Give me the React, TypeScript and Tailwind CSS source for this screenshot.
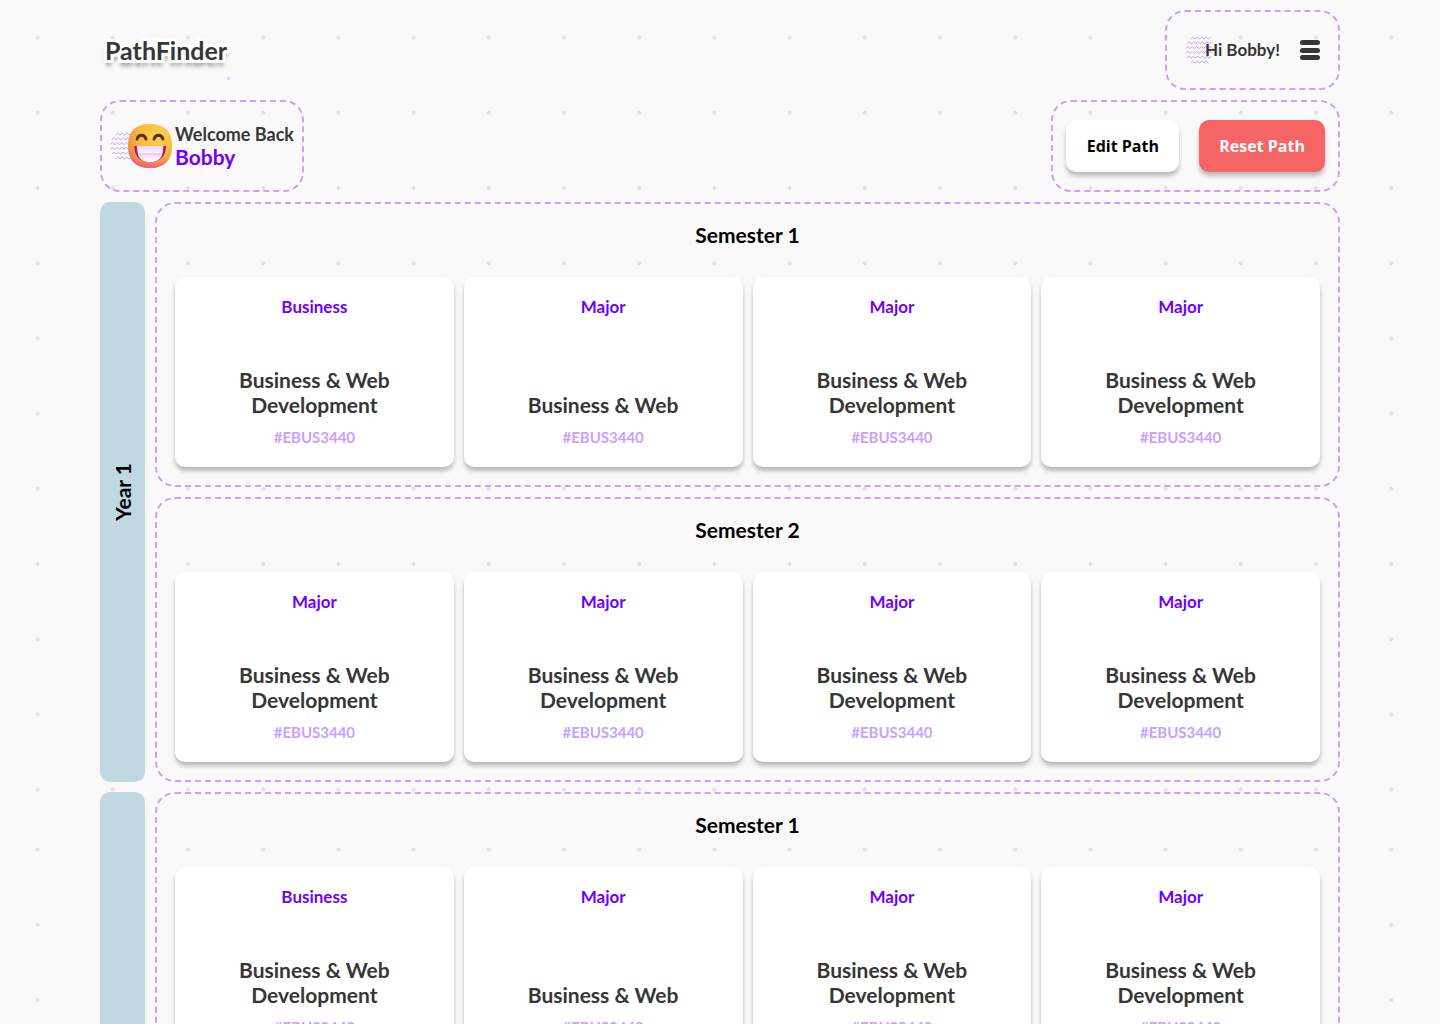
import React from "react";

const FONT = "font-['Century_Gothic','Lato',sans-serif]";

type Course = { category: string; title: string; code: string };
type Semester = { name: string; courses: Course[] };
type Year = { name: string; semesters: Semester[] };

const course = (category: string, title = "Business & Web Development"): Course => ({
  category,
  title,
  code: "#EBUS3440",
});

const firstSemester: Semester = {
  name: "Semester 1",
  courses: [course("Business"), course("Major", "Business & Web"), course("Major"), course("Major")],
};
const secondSemester: Semester = {
  name: "Semester 2",
  courses: [course("Major"), course("Major"), course("Major"), course("Major")],
};
const years: Year[] = [
  { name: "Year 1", semesters: [firstSemester, secondSemester] },
  { name: "Year 2", semesters: [firstSemester, secondSemester] },
];

/** Dotted backdrop, repeated in bands of 812px. */
function Dots() {
  const cells: { x: number; y: number }[] = [];
  for (let r = 0; r < 11; r++) {
    for (let c = 0; c < 10; c++) cells.push({ x: 37.6 + c * 75.2, y: 37.6 + r * 75.2 });
  }
  return (
    <svg aria-hidden="true" className="absolute inset-0 -z-10 h-full w-full">
      <defs>
        <pattern id="dots" width="752" height="812" patternUnits="userSpaceOnUse">
          {cells.map((p) => (
            <circle key={`${p.x}-${p.y}`} cx={p.x} cy={p.y} r="2" fill="#e1e1e1" />
          ))}
        </pattern>
      </defs>
      <rect width="100%" height="100%" fill="url(#dots)" />
    </svg>
  );
}

function Waves({ className }: { className: string }) {
  const rows = [
    { y: 2, x: 5.5, n: 9 },
    { y: 6.8, x: 1.7, n: 11 },
    { y: 11.6, x: 0.5, n: 12 },
    { y: 16.4, x: 0.5, n: 12 },
    { y: 21.2, x: 1.7, n: 11 },
    { y: 26, x: 5.5, n: 8 },
  ];
  return (
    <svg viewBox="0 0 28 28" aria-hidden="true" className={className} fill="none" stroke="#c9a0ff" strokeWidth="1">
      {rows.map((r) => {
        let d = `M${r.x} ${r.y + 1}`;
        for (let i = 0; i < r.n; i++) d += ` l2.25 ${i % 2 === 0 ? -2 : 2}`;
        return <path key={r.y} d={d} strokeLinejoin="round" />;
      })}
    </svg>
  );
}

function GrinEmoji({ className }: { className: string }) {
  return (
    <svg viewBox="0 0 44 44" role="img" aria-label="Grinning face" className={className}>
      <defs>
        <radialGradient id="face" cx="0.66" cy="0.26" r="0.85">
          <stop offset="0" stopColor="#ffd04e" />
          <stop offset="0.5" stopColor="#fdb93a" />
          <stop offset="0.8" stopColor="#f5923c" />
          <stop offset="1" stopColor="#e8577c" />
        </radialGradient>
        <linearGradient id="rim" x1="0" y1="0" x2="0" y2="1">
          <stop offset="0.8" stopColor="#e85490" stopOpacity="0" />
          <stop offset="1" stopColor="#e0529a" stopOpacity="0.7" />
        </linearGradient>
        <linearGradient id="teeth" x1="0" y1="0" x2="0" y2="1">
          <stop offset="0" stopColor="#ecd6fd" />
          <stop offset="0.44" stopColor="#f9f1ff" />
          <stop offset="0.5" stopColor="#dcbdf8" />
          <stop offset="0.6" stopColor="#f3e4ff" />
          <stop offset="1" stopColor="#fdf8ff" />
        </linearGradient>
      </defs>
      <path d="M22 0C36.500 0 44 7.500 44 22S36.500 44 22 44 0 36.500 0 22 7.500 0 22 0Z" fill="url(#face)" />
      <path d="M22 0C36.500 0 44 7.500 44 22S36.500 44 22 44 0 36.500 0 22 7.500 0 22 0Z" fill="url(#rim)" />
      <g fill="none" stroke="#4d3139" strokeWidth="2.9" strokeLinecap="round">
        <path d="M9 15.200C10.500 10 16.500 10 18 15.200" />
        <path d="M26 15.200C27.500 10 33.500 10 35 15.200" />
      </g>
      <path d="M6.2 22H38C37.800 32.500 32 38 22.100 38S6.400 32.500 6.200 22Z" fill="#b0128a" />
      <path d="M8.800 22H35.400L34.400 30C33 35.500 28.500 38 22.100 38S11.200 35.500 9.800 30Z" fill="url(#teeth)" />
    </svg>
  );
}

const panel = "rounded-[20px] border-2 border-dashed border-[#c9a0ff]";
const raised = "shadow-[0_4px_4px_rgba(0,0,0,0.25)]";

function CourseCard({ item }: { item: Course }) {
  return (
    <article className={`flex min-h-[190px] flex-col items-center rounded-[10px] bg-white p-5 text-center ${raised}`}>
      <p className="text-[17px] leading-5 font-bold text-[#6f00ff]">{item.category}</p>
      <h3 className="mt-auto max-w-[180px] text-[21px] leading-[25px] font-bold text-[#363636]">{item.title}</h3>
      <p className="mt-2.5 text-[15px] leading-5 font-bold text-[#c9a0ff]">{item.code}</p>
    </article>
  );
}

function SemesterPanel({ semester }: { semester: Semester }) {
  return (
    <section className={`${panel} p-[18px]`}>
      <h2 className="text-center text-[21px] leading-[25px] font-bold text-black">{semester.name}</h2>
      <div className="mt-[30px] grid grid-cols-4 gap-2.5">
        {semester.courses.map((c, i) => (
          <CourseCard key={i} item={c} />
        ))}
      </div>
    </section>
  );
}

export default function App() {
  return (
    <div className={`relative isolate min-h-screen bg-[#f9f9f9] ${FONT}`}>
      <Dots />
      <div className="flex flex-col gap-2.5 px-[100px] py-2.5">
        <header className="flex items-center justify-between">
          <a
            href="#"
            className="relative pl-[5px] text-[25px] leading-8 font-bold text-[#363636] [text-shadow:3px_0_0_#fff,-3px_0_0_#fff,0_3px_0_#fff,0_-3px_0_#fff,3px_3px_0_#fff,-3px_-3px_0_#fff,3px_-3px_0_#fff,-3px_3px_0_#fff,0_6px_4px_rgba(0,0,0,0.5)]"
          >
            PathFinder
            <span className="absolute top-[43px] left-[127px] size-[3px] bg-[#dcd3fa]" />
          </a>
          <div className={`${panel} flex h-20 items-center px-[18px]`}>
            <Waves className="size-7" />
            <span className="-ml-2 text-[17px] leading-5 font-bold text-[#363636]">Hi Bobby!</span>
            <button type="button" aria-label="Open menu" className="ml-5 flex h-5 w-5 flex-col justify-between">
              <span className="h-[5px] w-5 rounded-full bg-[#363636]" />
              <span className="h-[5px] w-5 rounded-full bg-[#363636]" />
              <span className="h-[5px] w-5 rounded-full bg-[#363636]" />
            </button>
          </div>
        </header>

        <div className="flex items-stretch justify-between">
          <div className={`${panel} flex items-center px-2`}>
            <Waves className="size-7" />
            <GrinEmoji className="-ml-2.5 size-11" />
            <div className="ml-[3px] font-bold">
              <p className="text-[18px] leading-5 text-[#363636]">Welcome Back</p>
              <p className="text-[21px] leading-[25px] text-[#6f00ff]">Bobby</p>
            </div>
          </div>
          <div className={`${panel} flex items-center gap-5 px-[13px] py-[18px] font-['Open_Sans','Noto_Sans',sans-serif] text-base font-bold`}>
            <button type="button" className={`h-[52px] min-w-[113px] rounded-[10px] bg-white px-5 text-black ${raised}`}>
              Edit Path
            </button>
            <button type="button" className={`h-[52px] rounded-[10px] bg-[#f56565] px-5 text-white ${raised}`}>
              Reset Path
            </button>
          </div>
        </div>

        <main className="flex flex-col gap-2.5">
          {years.map((year) => (
            <section key={year.name} className="flex gap-2.5">
              <div className="flex w-[45px] items-center justify-center rounded-[10px] bg-[#c0d8e2]">
                <h2 className="rotate-180 text-[21px] leading-[25px] font-bold text-black [writing-mode:vertical-rl]">
                  {year.name}
                </h2>
              </div>
              <div className="flex min-w-0 flex-1 flex-col gap-2.5">
                {year.semesters.map((s) => (
                  <SemesterPanel key={s.name} semester={s} />
                ))}
              </div>
            </section>
          ))}
        </main>
      </div>
    </div>
  );
}
